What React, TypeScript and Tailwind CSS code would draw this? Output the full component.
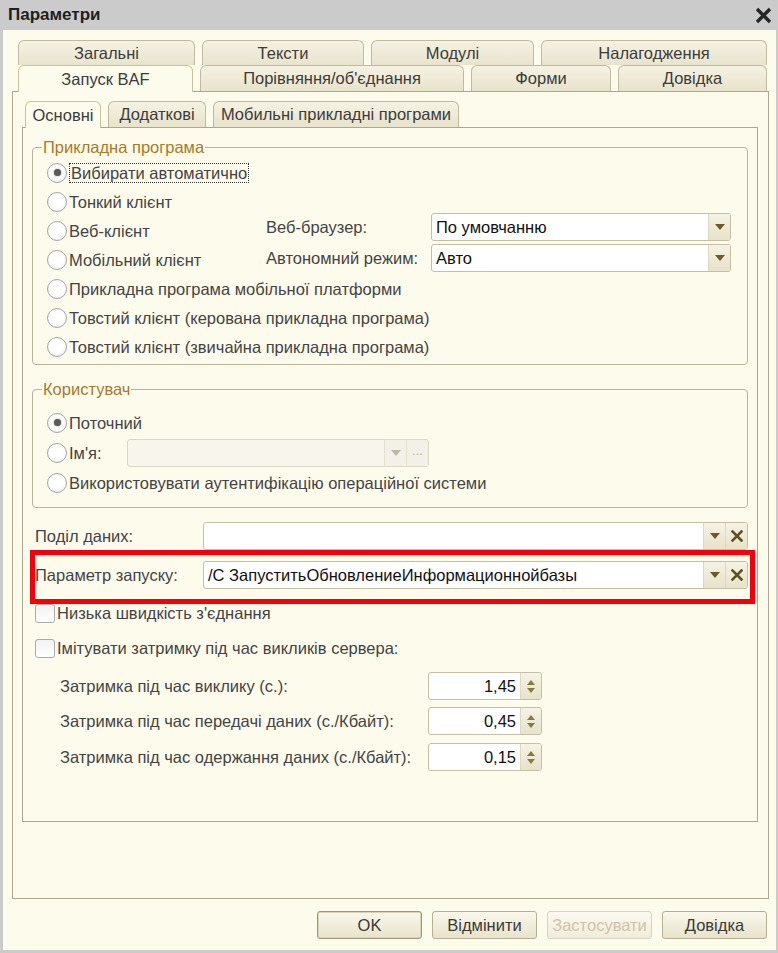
import type { ReactNode } from 'react';

// Small drawings used by the form controls
const ArrowDown = ({ color = '#6b5b26' }: { color?: string }) => (
  <svg width="10" height="6" viewBox="0 0 10 6">
    <path d="M0 0h10L5 6z" fill={color} />
  </svg>
);

const ArrowUp = ({ color = '#8a7a3c' }: { color?: string }) => (
  <svg width="8" height="5" viewBox="0 0 8 5">
    <path d="M0 5h8L4 0z" fill={color} />
  </svg>
);

const ClearIcon = () => (
  <svg width="12" height="12" viewBox="0 0 12 12">
    <path d="M1.5 1.5l9 9M10.5 1.5l-9 9" stroke="#5e5223" strokeWidth="2.6" strokeLinecap="square" />
  </svg>
);

function Tab({ label, width, active }: { label: string; width: string; active?: boolean }) {
  return (
    <div
      className={`${width} ${active ? 'h-[27px]' : 'h-[26px]'} shrink-0 rounded-t-[6px] border border-b-0 flex items-center justify-center text-[16.5px] text-[#3c3c3c] ${
        active
          ? 'relative z-10 bg-[#fdfbec] border-[#c8c1a0] border-t-[#e3be78]'
          : 'bg-gradient-to-b from-[#f5f2e3] to-[#e8e3cb] border-[#bfbaa0]'
      }`}
    >
      {label}
    </div>
  );
}

function Radio({ label, checked, focused }: { label: string; checked?: boolean; focused?: boolean }) {
  return (
    <div className="flex items-center gap-[2px]">
      <span className="w-[20px] h-[20px] shrink-0 rounded-full border border-[#a7a7a7] bg-[radial-gradient(circle_at_50%_45%,#ffffff_50%,#e2e2e2_100%)] flex items-center justify-center">
        {checked && <span className="w-[7px] h-[7px] rounded-full bg-[#5a5a5a] shadow-[0_0_2px_#888]" />}
      </span>
      <span className={focused ? 'border border-dotted border-[#333] px-[1px] leading-[18px]' : 'leading-[18px]'}>{label}</span>
    </div>
  );
}

function Checkbox({ label }: { label: string }) {
  return (
    <div className="flex items-center gap-[2px]">
      <span className="w-[20px] h-[19px] shrink-0 rounded-[3px] border border-[#a9a9a9] bg-gradient-to-b from-[#f2f2f2] to-white" />
      <span>{label}</span>
    </div>
  );
}

function BtnCell({ children, disabled }: { children: ReactNode; disabled?: boolean }) {
  return (
    <span
      className={`w-[22px] h-full shrink-0 flex items-center justify-center border-l ${
        disabled ? 'border-[#e4e0cf] bg-[#f3f1e7]' : 'border-[#ddd8bf] bg-gradient-to-b from-[#f6f3e5] to-[#e7e2c9]'
      }`}
    >
      {children}
    </span>
  );
}

function Field({ value, width, clear, disabled, ellipsis }: { value?: string; width: string; clear?: boolean; disabled?: boolean; ellipsis?: boolean }) {
  return (
    <div
      className={`${width} h-[28px] shrink-0 flex rounded-[3px] border overflow-hidden ${
        disabled ? 'border-[#dcd8c6] bg-[#f7f5ec]' : 'border-[#c4bfa5] bg-white'
      }`}
    >
      <span className="flex-1 flex items-center pl-[4px] text-[16.5px] text-[#111] whitespace-nowrap">{value}</span>
      <BtnCell disabled={disabled}>
        <ArrowDown color={disabled ? '#bdb8a4' : '#6b5b26'} />
      </BtnCell>
      {ellipsis && (
        <BtnCell disabled>
          <span className="text-[13px] leading-none text-[#b5b1a0] -mt-[4px]">...</span>
        </BtnCell>
      )}
      {clear && (
        <BtnCell>
          <ClearIcon />
        </BtnCell>
      )}
    </div>
  );
}

function Spinner({ value }: { value: string }) {
  return (
    <div className="w-[114px] h-[28px] shrink-0 flex rounded-[3px] border border-[#c4bfa5] bg-white overflow-hidden">
      <span className="flex-1 flex items-center justify-end pr-[4px] text-[16.5px] text-[#111]">{value}</span>
      <span className="w-[21px] h-full flex flex-col items-center justify-center gap-[3px] border-l border-[#ddd8bf] bg-gradient-to-b from-[#f6f3e5] to-[#e7e2c9]">
        <ArrowUp />
        <svg width="8" height="5" viewBox="0 0 8 5">
          <path d="M0 0h8L4 5z" fill="#8a7a3c" />
        </svg>
      </span>
    </div>
  );
}

function Button({ label, primary, disabled }: { label: string; primary?: boolean; disabled?: boolean }) {
  return (
    <div
      className={`w-[105px] h-[28px] rounded-[3px] border flex items-center justify-center text-[16.5px] bg-gradient-to-b ${
        disabled
          ? 'border-[#d8d3bf] from-[#fbf9f0] to-[#f1eddd] text-[#d2c2a4]'
          : primary
            ? 'border-[#9d977c] shadow-[inset_0_0_0_1px_#d9d3b8] from-[#faf8ec] to-[#e9e3ca] text-[#3a3a3a]'
            : 'border-[#b5af95] from-[#faf8ec] to-[#e9e3ca] text-[#3a3a3a]'
      }`}
    >
      {label}
    </div>
  );
}

export default function App() {
  return (
    <div className="w-[778px] h-[953px] bg-[#cbcbcb] pl-[3px] pr-[2px] pb-[3px] flex flex-col font-['Liberation_Sans',Arial,sans-serif] text-[16.5px] text-[#444]">
      {/* Title bar */}
      <div className="h-[30px] shrink-0 flex items-center justify-between pl-[5px] pr-[4px]">
        <span className="text-[17px] font-bold text-[#1f1f1f]">Параметри</span>
        <svg width="17" height="17" viewBox="0 0 17 17">
          <path d="M2 2l13 13M15 2L2 15" stroke="#262626" strokeWidth="3.4" />
        </svg>
      </div>

      <div className="flex-1 bg-[#fdfbec] flex flex-col">
        <div className="ml-[9px] w-[757px] mt-[10px]">
          {/* Page tabs, two rows */}
          <div className="flex gap-[7px] pl-[6px] h-[25px] overflow-hidden">
            <Tab label="Загальні" width="w-[177px]" />
            <Tab label="Тексти" width="w-[162px]" />
            <Tab label="Модулі" width="w-[163px]" />
            <Tab label="Налагодження" width="w-[226px]" />
          </div>
          <div className="flex items-start gap-[7px] pl-[6px] h-[27px] -mb-px relative z-10">
            <Tab label="Запуск BAF" width="w-[175px]" active />
            <Tab label="Порівняння/об'єднання" width="w-[264px]" />
            <Tab label="Форми" width="w-[140px]" />
            <Tab label="Довідка" width="w-[149px]" />
          </div>

          <div className="h-[808px] border border-[#aca88f] pt-[9px] pl-[9px]">
            <div className="flex items-start gap-[7px] pl-[3px] h-[27px] -mb-px relative z-10">
              <Tab label="Основні" width="w-[76px]" active />
              <Tab label="Додаткові" width="w-[98px]" />
              <Tab label="Мобильні прикладні програми" width="w-[246px]" />
            </div>

            <div className="w-[736px] h-[695px] border border-[#aca88f] pl-[9px]">
              {/* Application type */}
              <fieldset className="w-[716px] mt-[10px] border border-[#b8b399] rounded-[4px] pl-[14px] pb-[3px]">
                <legend className="-ml-[5px] px-[1px] text-[#a87a2a] leading-[18px]">Прикладна програма</legend>
                <div className="pt-[2px]">
                  <div className="h-[29px] flex items-center">
                    <Radio label="Вибирати автоматично" checked focused />
                  </div>
                  <div className="h-[29px] flex items-center">
                    <Radio label="Тонкий клієнт" />
                  </div>
                  <div className="flex">
                    <div className="w-[219px]">
                      <div className="h-[29px] flex items-center">
                        <Radio label="Веб-клієнт" />
                      </div>
                      <div className="h-[29px] flex items-center">
                        <Radio label="Мобільний клієнт" />
                      </div>
                    </div>
                    <div className="-mt-[3px] flex flex-col gap-[3px]">
                      <div className="flex items-center">
                        <span className="w-[165px]">Веб-браузер:</span>
                        <Field value="По умовчанню" width="w-[300px]" />
                      </div>
                      <div className="flex items-center">
                        <span className="w-[165px]">Автономний режим:</span>
                        <Field value="Авто" width="w-[300px]" />
                      </div>
                    </div>
                  </div>
                  <div className="h-[29px] flex items-center">
                    <Radio label="Прикладна програма мобільної платформи" />
                  </div>
                  <div className="h-[29px] flex items-center">
                    <Radio label="Товстий клієнт (керована прикладна програма)" />
                  </div>
                  <div className="h-[29px] flex items-center">
                    <Radio label="Товстий клієнт (звичайна прикладна програма)" />
                  </div>
                </div>
              </fieldset>

              {/* User */}
              <fieldset className="w-[716px] mt-[15px] border border-[#b8b399] rounded-[4px] pl-[14px] pb-[10px]">
                <legend className="-ml-[5px] px-[1px] text-[#a87a2a] leading-[18px]">Користувач</legend>
                <div className="pt-[10px]">
                  <div className="h-[29px] flex items-center">
                    <Radio label="Поточний" checked />
                  </div>
                  <div className="h-[31px] flex items-center">
                    <div className="w-[80px]">
                      <Radio label="Ім'я:" />
                    </div>
                    <Field width="w-[302px]" disabled ellipsis />
                  </div>
                  <div className="h-[29px] flex items-center">
                    <Radio label="Використовувати аутентифікацію операційної системи" />
                  </div>
                </div>
              </fieldset>

              <div className="mt-[14px] ml-[3px] h-[28px] flex items-center">
                <span className="w-[168px]">Поділ даних:</span>
                <Field width="w-[545px]" clear />
              </div>

              <div className="-ml-[2px] w-[725px] border-[5px] border-[#f2000c] pt-[6px] pb-[10px] flex items-center">
                <span className="w-[168px]">Параметр запуску:</span>
                <Field value="/C ЗапуститьОбновлениеИнформационнойбазы" width="w-[545px]" clear />
              </div>

              <div className="ml-[3px] h-[19px] flex items-center">
                <Checkbox label="Низька швидкість з'єднання" />
              </div>
              <div className="ml-[3px] mt-[16px] h-[19px] flex items-center">
                <Checkbox label="Імітувати затримку під час викликів сервера:" />
              </div>

              <div className="ml-[28px] mt-[14px] flex items-center">
                <span className="w-[368px]">Затримка під час виклику (с.):</span>
                <Spinner value="1,45" />
              </div>
              <div className="ml-[28px] mt-[7px] flex items-center">
                <span className="w-[368px]">Затримка під час передачі даних (с./Кбайт):</span>
                <Spinner value="0,45" />
              </div>
              <div className="ml-[28px] mt-[8px] flex items-center">
                <span className="w-[368px]">Затримка під час одержання даних (с./Кбайт):</span>
                <Spinner value="0,15" />
              </div>
            </div>
          </div>
        </div>

        {/* Dialog buttons */}
        <div className="mt-[12px] flex justify-end gap-[10px] pr-[9px]">
          <Button label="OK" primary />
          <Button label="Відмінити" />
          <Button label="Застосувати" disabled />
          <Button label="Довідка" />
        </div>
      </div>
    </div>
  );
}
